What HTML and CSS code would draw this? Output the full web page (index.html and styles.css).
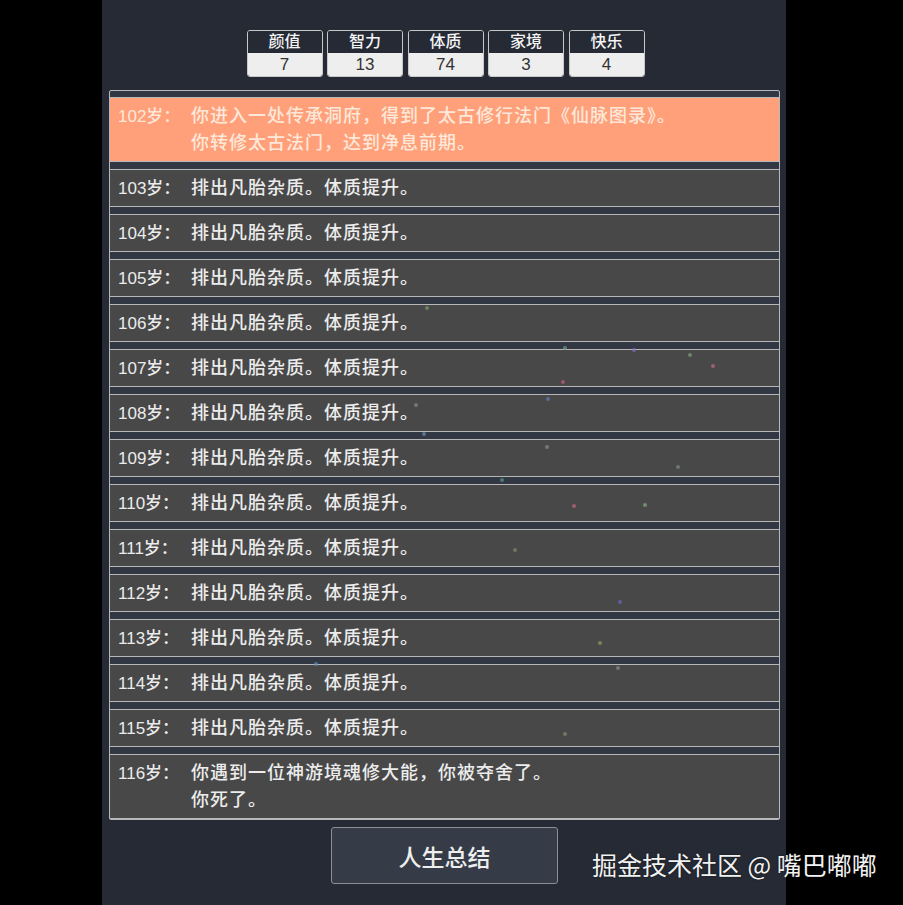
FILE: index.html
```html
<!DOCTYPE html>
<html lang="zh-CN">

<head>
    <meta charset="UTF-8">
    <meta name="viewport" content="width=device-width, initial-scale=1.0">
    <title>人生重开模拟器</title>
    <link rel="stylesheet" href="styles.css">
</head>

<body>
    <div class="screen">
        <!-- 背景粒子 -->
        <div class="particles">
            <span class="dot" style="left:425px;top:306px;background:#7c9a6a"></span>
            <span class="dot" style="left:563px;top:346px;background:#6fa08a"></span>
            <span class="dot" style="left:632px;top:348px;background:#8a6fc0"></span>
            <span class="dot" style="left:688px;top:353px;background:#7fa07a"></span>
            <span class="dot" style="left:711px;top:364px;background:#c06a8a"></span>
            <span class="dot" style="left:561px;top:380px;background:#c05a8a"></span>
            <span class="dot" style="left:414px;top:403px;background:#8a8a8a"></span>
            <span class="dot" style="left:546px;top:397px;background:#6a7ab0"></span>
            <span class="dot" style="left:422px;top:432px;background:#6a90b0"></span>
            <span class="dot" style="left:545px;top:445px;background:#8a8a8a"></span>
            <span class="dot" style="left:676px;top:465px;background:#7a8a7a"></span>
            <span class="dot" style="left:500px;top:478px;background:#5a9a7a"></span>
            <span class="dot" style="left:572px;top:504px;background:#c06a7a"></span>
            <span class="dot" style="left:643px;top:503px;background:#7ab07a"></span>
            <span class="dot" style="left:513px;top:548px;background:#7a8a6a"></span>
            <span class="dot" style="left:618px;top:600px;background:#6a6ac0"></span>
            <span class="dot" style="left:598px;top:641px;background:#9a9a5a"></span>
            <span class="dot" style="left:314px;top:662px;background:#5a90c0"></span>
            <span class="dot" style="left:616px;top:666px;background:#8a8a8a"></span>
            <span class="dot" style="left:563px;top:732px;background:#8a8a6a"></span>
        </div>

        <div class="panel">
            <ul class="stats">
                <li class="stat"><div class="stat-name">颜值</div><div class="stat-value">7</div></li>
                <li class="stat"><div class="stat-name">智力</div><div class="stat-value">13</div></li>
                <li class="stat"><div class="stat-name">体质</div><div class="stat-value">74</div></li>
                <li class="stat"><div class="stat-name">家境</div><div class="stat-value">3</div></li>
                <li class="stat"><div class="stat-name">快乐</div><div class="stat-value">4</div></li>
            </ul>

            <ul class="trajectory">
                <li class="event grade">
                    <span class="age">102岁：</span>
                    <span class="content">你进入一处传承洞府，得到了太古修行法门《仙脉图录》。<br>你转修太古法门，达到净息前期。</span>
                </li>
                <li class="event"><span class="age">103岁：</span><span class="content">排出凡胎杂质。体质提升。</span></li>
                <li class="event"><span class="age">104岁：</span><span class="content">排出凡胎杂质。体质提升。</span></li>
                <li class="event"><span class="age">105岁：</span><span class="content">排出凡胎杂质。体质提升。</span></li>
                <li class="event"><span class="age">106岁：</span><span class="content">排出凡胎杂质。体质提升。</span></li>
                <li class="event"><span class="age">107岁：</span><span class="content">排出凡胎杂质。体质提升。</span></li>
                <li class="event"><span class="age">108岁：</span><span class="content">排出凡胎杂质。体质提升。</span></li>
                <li class="event"><span class="age">109岁：</span><span class="content">排出凡胎杂质。体质提升。</span></li>
                <li class="event"><span class="age">110岁：</span><span class="content">排出凡胎杂质。体质提升。</span></li>
                <li class="event"><span class="age">111岁：</span><span class="content">排出凡胎杂质。体质提升。</span></li>
                <li class="event"><span class="age">112岁：</span><span class="content">排出凡胎杂质。体质提升。</span></li>
                <li class="event"><span class="age">113岁：</span><span class="content">排出凡胎杂质。体质提升。</span></li>
                <li class="event"><span class="age">114岁：</span><span class="content">排出凡胎杂质。体质提升。</span></li>
                <li class="event"><span class="age">115岁：</span><span class="content">排出凡胎杂质。体质提升。</span></li>
                <li class="event">
                    <span class="age">116岁：</span>
                    <span class="content">你遇到一位神游境魂修大能，你被夺舍了。<br>你死了。</span>
                </li>
            </ul>

            <button class="summary-button">人生总结</button>
        </div>

        <div class="watermark">掘金技术社区 @ 嘴巴嘟嘟</div>
    </div>
</body>

</html>
```

FILE: styles.css
```css
* {
    box-sizing: border-box;
}

html,
body {
    margin: 0;
    padding: 0;
    background: #000;
}

body {
    font-family: "Liberation Sans", "Noto Sans CJK SC", sans-serif;
    color: #e8e8e8;
}

.screen {
    position: relative;
    width: 903px;
    height: 905px;
    overflow: hidden;
}

.particles {
    position: absolute;
    left: 0;
    top: 0;
    width: 100%;
    height: 100%;
    z-index: 2;
    pointer-events: none;
}

.dot {
    position: absolute;
    width: 4px;
    height: 4px;
    border-radius: 50%;
    opacity: .7;
}

.panel {
    width: 684px;
    height: 905px;
    margin-left: 102px;
    padding: 30px 6px 0 7px;
    background: #252a34;
    display: flex;
    flex-direction: column;
    align-items: center;
}

/* 属性 */
.stats {
    list-style: none;
    margin: 0 0 0 2px;
    padding: 0;
    display: flex;
    gap: 4.5px;
}

.stat {
    width: 76px;
    border: 1px solid #c8c8c8;
    border-radius: 3px;
    overflow: hidden;
}

.stat-name {
    height: 22px;
    line-height: 22px;
    text-align: center;
    font-size: 16px;
    font-weight: 500;
    color: #f4f4f4;
    background: #252a34;
}

.stat-value {
    height: 23px;
    line-height: 23px;
    text-align: center;
    font-size: 17px;
    color: #333;
    background: #eee;
}

/* 人生轨迹 */
.trajectory {
    list-style: none;
    margin: 13px 0 0;
    padding: 0;
    width: 671px;
    border: 1px solid #b5b8bd;
    border-radius: 2px;
    background: #323843;
}

.event {
    display: flex;
    margin-top: 6px;
    padding: 5px 8px 4px;
    border-top: 1px solid #b8b8b8;
    border-bottom: 1px solid #b8b8b8;
    background: #484848;
    font-size: 17px;
    font-weight: 500;
    line-height: 27px;
    color: #ececec;
}

.event + .event {
    margin-top: 7px;
}

.event .age {
    flex: none;
    width: 73px;
}

.event .content {
    font-size: 18px;
    letter-spacing: 1px;
}

.event.grade {
    background: #ffa07a;
    color: #fde8da;
}

.summary-button {
    margin-top: 7px;
    width: 227px;
    height: 57px;
    border: 1px solid #8a8e95;
    border-radius: 3px;
    background: #363c47;
    color: #eee;
    font-family: "Noto Sans CJK SC", sans-serif;
    font-size: 23px;
    font-weight: 500;
    cursor: pointer;
}

.watermark {
    position: absolute;
    left: 592px;
    top: 846px;
    font-family: "Noto Sans CJK SC", sans-serif;
    font-size: 25px;
    color: #f2f2f2;
    text-shadow: 0 0 2px rgba(0, 0, 0, .6);
    white-space: nowrap;
}
```
